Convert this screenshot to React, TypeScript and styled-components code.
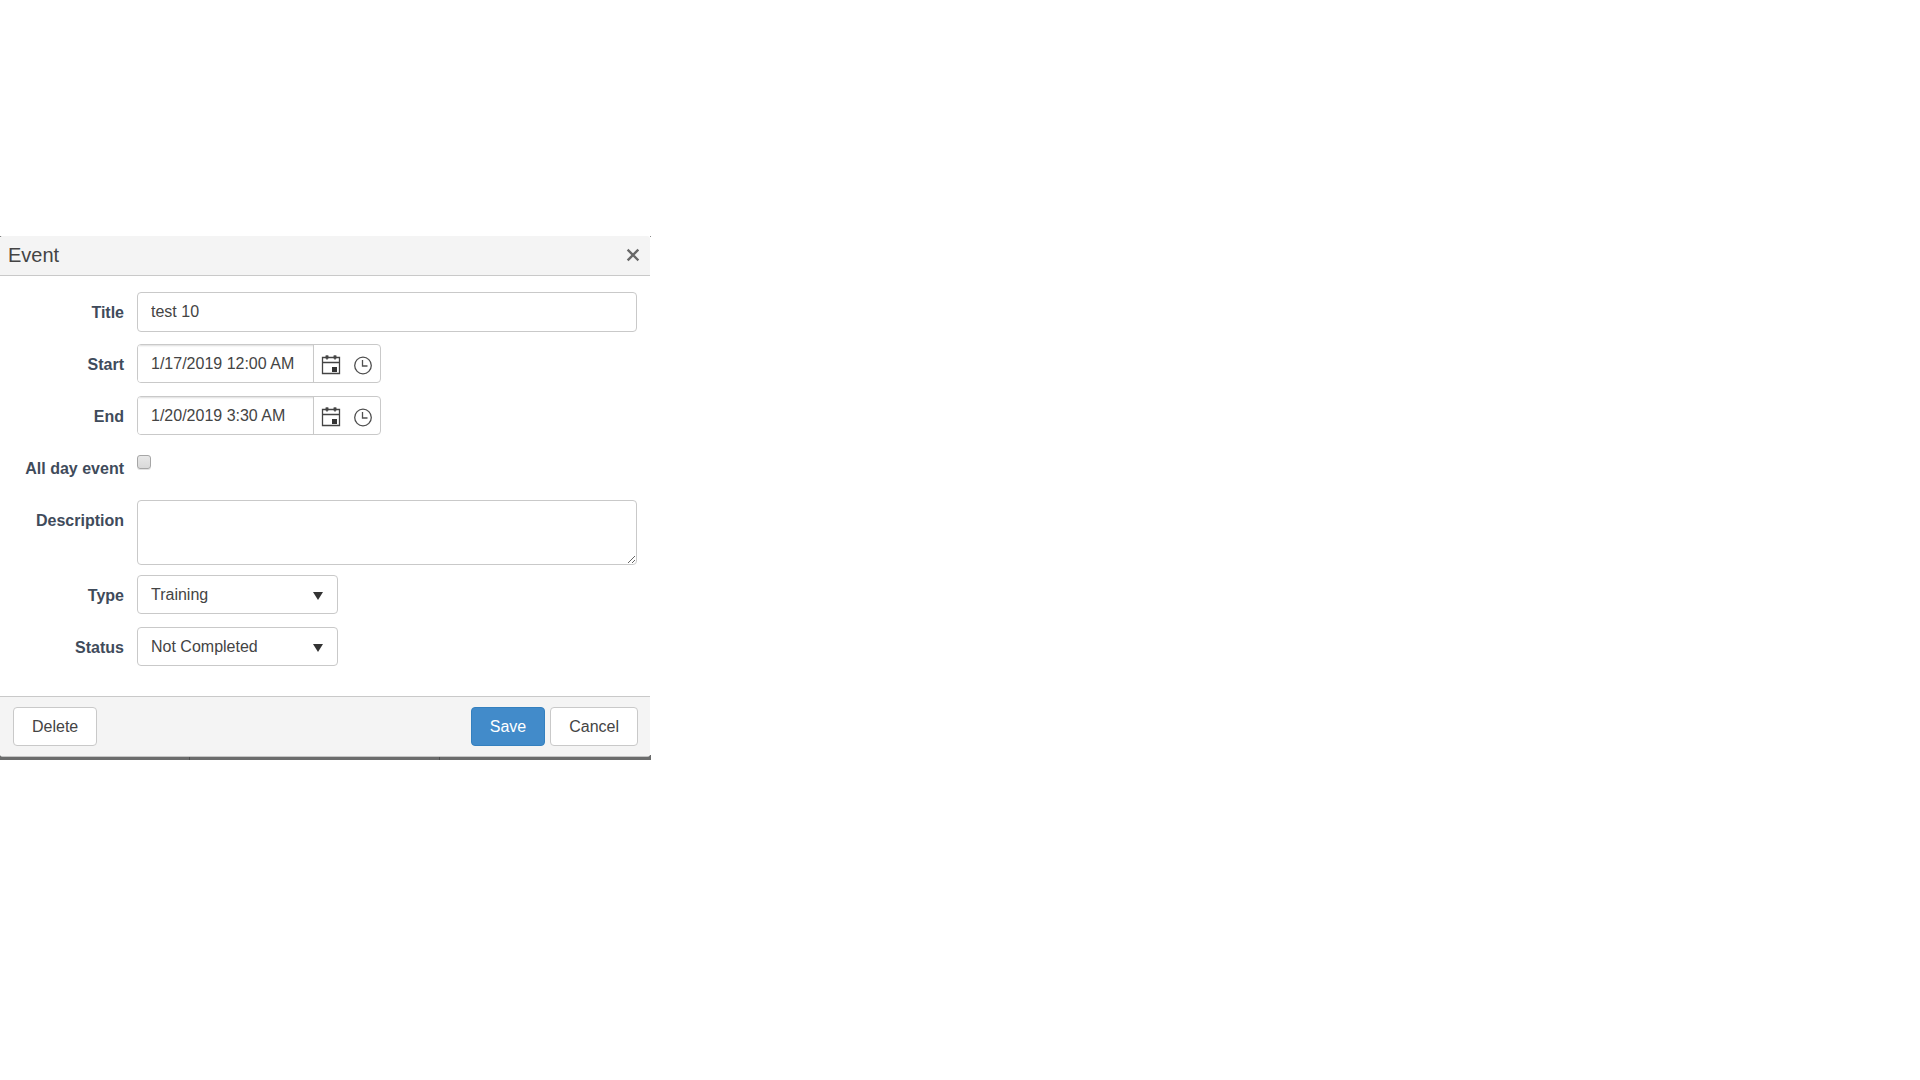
import React from 'react';
import styled, { createGlobalStyle } from 'styled-components';

const GlobalStyle = createGlobalStyle`
  *, *::before, *::after { box-sizing: border-box; }
  body {
    margin: 0;
    background: #fff;
    color: #444;
    font: 16px/20px "Liberation Sans", Arial, sans-serif;
  }
  button, input, select, textarea { font: inherit; color: inherit; margin: 0; }
`;

const Page = styled.main`
  padding-top: 236px;
`;

const Backdrop = styled.div`
  width: 651px;
  max-width: 100%;
  padding: 0 1px 3px 0;
  background:
    linear-gradient(#4f5050, #4f5050) 189px 100% / 1px 3px no-repeat,
    linear-gradient(#4f5050, #4f5050) 439px 100% / 1px 3px no-repeat,
    linear-gradient(#6b6c6c, #6b6c6c) 0 100% / 100% 5px no-repeat,
    linear-gradient(#6b6c6c, #6b6c6c) 0 0 / 2px 1px no-repeat,
    linear-gradient(#8b8c8c, #8b8c8c) 100% 0 / 1px 1px no-repeat;
`;

const Dialog = styled.form`
  background: #fff;
  border-radius: 3px;
  border-bottom: 1px solid #c5c5c5;
  overflow: hidden;
`;

const Header = styled.header`
  display: flex;
  align-items: center;
  justify-content: space-between;
  height: 40px;
  padding: 0 7px 2px 8px;
  background: #f4f4f4;
  border-bottom: 1px solid #c9c9c9;
`;

const Heading = styled.h1`
  margin: 0;
  font-size: 20px;
  line-height: 24px;
  font-weight: 400;
`;

const IconButton = styled.button`
  display: flex;
  align-items: center;
  justify-content: center;
  width: 20px;
  height: 24px;
  padding: 0;
  border: 0;
  background: none;
  cursor: pointer;
`;

const Fields = styled.div`
  padding: 16px 13px 17px 0;
`;

const Row = styled.div`
  display: grid;
  grid-template-columns: 124px 1fr;
  column-gap: 13px;
  align-items: start;
  min-height: 52px;
`;

const Label = styled.label`
  padding-top: 11px;
  text-align: right;
  font-weight: 700;
  color: #3f4b5b;
`;

const outline = `
  background: #fff;
  border: 1px solid #c9c9c9;
  border-radius: 4px;
`;

const TextInput = styled.input`
  ${outline}
  width: 100%;
  height: 40px;
  padding: 0 13px;
`;

const TextArea = styled.textarea`
  ${outline}
  display: block;
  width: 100%;
  height: 65px;
  margin-bottom: 10px;
  padding: 8px 13px;
  resize: both;
`;

const Picker = styled.div`
  ${outline}
  display: flex;
  justify-self: start;
  width: 244px;
  height: 39px;
  overflow: hidden;
`;

const PickerInput = styled.input`
  flex: 1;
  min-width: 0;
  padding: 0 13px;
  border: 0;
  border-right: 1px solid #c9c9c9;
  box-shadow: inset 0 2px 2px -1px #ddd;
`;

const PickerButtons = styled.div`
  display: flex;
  align-items: center;
  gap: 12px;
  padding: 2px 7px 0;
`;

const Checkbox = styled.input`
  appearance: none;
  width: 14px;
  height: 14px;
  margin-top: 7px;
  border: 1px solid #a6a6a6;
  border-radius: 3px;
  background: linear-gradient(#e8e8e8, #d9d9d9);
  box-shadow: 0 1px 0 #e2e2e2;
  &:checked { background: #428bca; }
`;

const SelectBox = styled.div`
  ${outline}
  display: grid;
  align-items: center;
  justify-self: start;
  width: 201px;
  height: 39px;
  & > * { grid-area: 1 / 1; }
  & > svg { justify-self: end; margin: 2px 14px 0 0; pointer-events: none; }
`;

const Select = styled.select`
  appearance: none;
  width: 100%;
  height: 37px;
  padding: 0 32px 0 13px;
  border: 0;
  background: transparent;
`;

const Footer = styled.footer`
  display: flex;
  gap: 5px;
  padding: 10px 12px 10px 13px;
  background: #f4f4f4;
  border-top: 1px solid #c9c9c9;
`;

const Button = styled.button<{ $primary?: boolean; $first?: boolean }>`
  height: 39px;
  padding: 0 18px;
  border: 1px solid ${p => (p.$primary ? '#3480bf' : '#c9c9c9')};
  border-radius: 4px;
  background: ${p => (p.$primary ? '#428bca' : '#fff')};
  color: ${p => (p.$primary ? '#fff' : '#444')};
  margin-right: ${p => (p.$first ? 'auto' : '0')};
  cursor: pointer;
`;

const CloseIcon = () => (
  <svg width="14" height="14" viewBox="0 0 14 14" fill="none" stroke="#686868" strokeWidth="2.4" strokeLinecap="square">
    <path d="M2.5 2.5 11.5 11.5M11.5 2.5 2.5 11.5" />
  </svg>
);

const CalendarIcon = () => (
  <svg width="20" height="20" viewBox="0 0 20 20" fill="none" stroke="#444">
    <path d="M1.5 2.5h17v16h-17zM1.5 7.5h17" strokeWidth="1.3" />
    <path d="M4.5 2h3M12.5 2h3" strokeWidth="3" />
    <path d="M6 .5v4M14 .5v4" strokeWidth="1.5" />
    <path d="M11 12h5v5h-5z" fill="#333" stroke="none" />
  </svg>
);

const ClockIcon = () => (
  <svg width="20" height="20" viewBox="0 0 20 20" fill="none" stroke="#505050" strokeWidth="1.3">
    <circle cx="10" cy="10.5" r="8.3" />
    <path d="M9.5 5v6h5" />
  </svg>
);

const ArrowIcon = () => (
  <svg width="10" height="8" viewBox="0 0 10 8" aria-hidden="true">
    <path d="M0 0h10L5 8z" fill="#333" />
  </svg>
);

function DateTimeRow({ id, label, value }: { id: string; label: string; value: string }) {
  return (
    <Row>
      <Label htmlFor={id}>{label}</Label>
      <Picker>
        <PickerInput id={id} defaultValue={value} />
        <PickerButtons>
          <IconButton type="button" aria-label={`${label} date`}><CalendarIcon /></IconButton>
          <IconButton type="button" aria-label={`${label} time`}><ClockIcon /></IconButton>
        </PickerButtons>
      </Picker>
    </Row>
  );
}

function SelectRow({ id, label, options }: { id: string; label: string; options: string[] }) {
  return (
    <Row>
      <Label htmlFor={id}>{label}</Label>
      <SelectBox>
        <Select id={id}>
          {options.map(option => <option key={option}>{option}</option>)}
        </Select>
        <ArrowIcon />
      </SelectBox>
    </Row>
  );
}

export default function App() {
  return (
    <>
      <GlobalStyle />
      <Page>
        <Backdrop>
          <Dialog onSubmit={e => e.preventDefault()}>
            <Header>
              <Heading>Event</Heading>
              <IconButton type="button" aria-label="Close"><CloseIcon /></IconButton>
            </Header>
            <Fields>
              <Row>
                <Label htmlFor="title">Title</Label>
                <TextInput id="title" defaultValue="test 10" />
              </Row>
              <DateTimeRow id="start" label="Start" value="1/17/2019 12:00 AM" />
              <DateTimeRow id="end" label="End" value="1/20/2019 3:30 AM" />
              <Row>
                <Label htmlFor="all-day">All day event</Label>
                <Checkbox id="all-day" type="checkbox" />
              </Row>
              <Row>
                <Label htmlFor="description">Description</Label>
                <TextArea id="description" />
              </Row>
              <SelectRow id="type" label="Type" options={['Training']} />
              <SelectRow id="status" label="Status" options={['Not Completed']} />
            </Fields>
            <Footer>
              <Button type="button" $first>Delete</Button>
              <Button type="submit" $primary>Save</Button>
              <Button type="button">Cancel</Button>
            </Footer>
          </Dialog>
        </Backdrop>
      </Page>
    </>
  );
}
